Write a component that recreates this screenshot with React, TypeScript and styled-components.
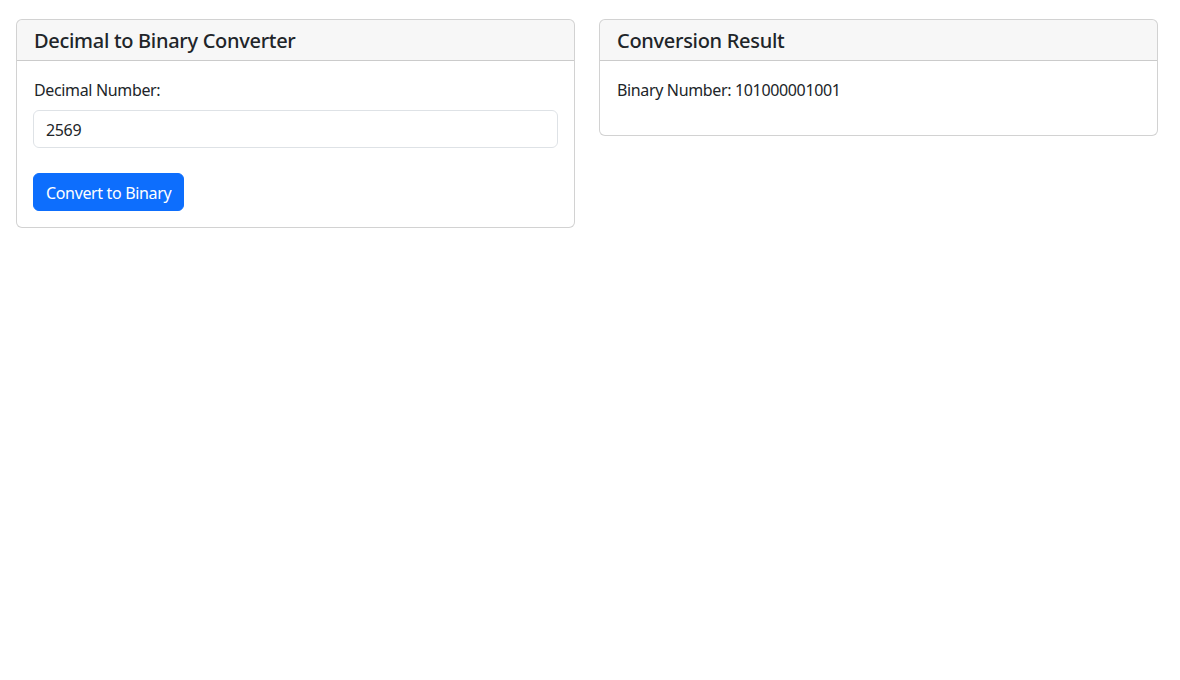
import styled, { createGlobalStyle } from "styled-components";
import { useState } from "react";

const GlobalStyle = createGlobalStyle`
  * { box-sizing: border-box; }
  body {
    margin: 0;
    background: #fff;
    color: #212529;
    font-family: "Noto Sans", "Open Sans", sans-serif;
    font-size: 16px;
    line-height: 1.5;
    letter-spacing: -0.35px;
  }
`;

const Page = styled.div`
  display: grid;
  grid-template-columns: 559px 559px;
  gap: 24px;
  align-items: start;
  padding: 19px 0 0 16px;
`;

const Card = styled.div`
  border: 1px solid rgba(0, 0, 0, 0.175);
  border-radius: 6px;
  background: #fff;
  overflow: hidden;
`;

const CardHeader = styled.div`
  padding: 9px 16px 7px 17px;
  background: rgba(0, 0, 0, 0.03);
  border-bottom: 1px solid rgba(0, 0, 0, 0.175);
`;

const CardTitle = styled.h5`
  margin: 0;
  font-size: 20px;
  font-weight: 500;
  line-height: 24px;
  letter-spacing: -0.3px;
  color: #212529;
`;

const CardBody = styled.div`
  padding: 17px 16px 16px;
`;

const Label = styled.label`
  display: block;
  margin: 0 0 8px 1px;
`;

const Input = styled.input`
  display: block;
  width: 100%;
  height: 38px;
  padding: 7px 12px 5px;
  font: inherit;
  letter-spacing: inherit;
  color: #212529;
  border: 1px solid #dee2e6;
  border-radius: 6px;
  outline: none;
  margin-bottom: 25px;
`;

const Button = styled.button`
  display: block;
  height: 38px;
  padding: 7px 12px 5px;
  font: inherit;
  letter-spacing: inherit;
  color: #fff;
  background: #0d6efd;
  border: 1px solid #0d6efd;
  border-radius: 6px;
  cursor: pointer;
`;

const Result = styled.p`
  margin: 0 0 17px 1px;
`;

export default function App() {
  const [value, setValue] = useState("2569");
  const [binary, setBinary] = useState("101000001001");

  const convert = () => {
    const n = parseInt(value, 10);
    setBinary(isNaN(n) ? "" : n.toString(2));
  };

  return (
    <>
      <GlobalStyle />
      <Page>
        <Card>
          <CardHeader>
            <CardTitle>Decimal to Binary Converter</CardTitle>
          </CardHeader>
          <CardBody>
            <Label htmlFor="decimal">Decimal Number:</Label>
            <Input
              id="decimal"
              value={value}
              onChange={(e) => setValue(e.target.value)}
            />
            <Button onClick={convert}>Convert to Binary</Button>
          </CardBody>
        </Card>
        <Card>
          <CardHeader>
            <CardTitle>Conversion Result</CardTitle>
          </CardHeader>
          <CardBody>
            <Result>Binary Number: {binary}</Result>
          </CardBody>
        </Card>
      </Page>
    </>
  );
}
